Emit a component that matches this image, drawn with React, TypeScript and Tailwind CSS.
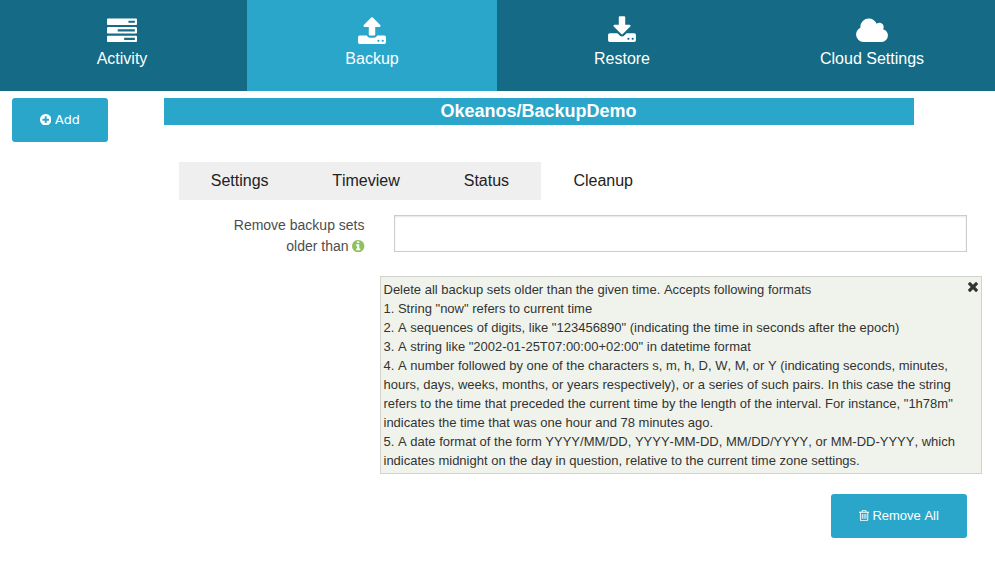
import React from 'react';

const circle =
  'q0 209-103 385.5t-279.5 279.5-385.5 103-385.5-103-279.5-279.5-103-385.5 103-385.5 279.5-279.5 385.5-103 385.5 103 279.5 279.5 103 385.5z';

const paths = {
  tasks:
    'M1024 1408h640v-128h-640v128zm-384-512h1024v-128h-1024v128zm640-512h384v-128h-384v128zm512 832v256q0 26-19 45t-45 19h-1664q-26 0-45-19t-19-45v-256q0-26 19-45t45-19h1664q26 0 45 19t19 45zm0-512v256q0 26-19 45t-45 19h-1664q-26 0-45-19t-19-45v-256q0-26 19-45t45-19h1664q26 0 45 19t19 45zm0-512v256q0 26-19 45t-45 19h-1664q-26 0-45-19t-19-45v-256q0-26 19-45t45-19h1664q26 0 45 19t19 45z',
  upload:
    'M1344 1472q0-26-19-45t-45-19-45 19-19 45 19 45 45 19 45-19 19-45zm256 0q0-26-19-45t-45-19-45 19-19 45 19 45 45 19 45-19 19-45zm128-224v320q0 40-28 68t-68 28h-1472q-40 0-68-28t-28-68v-320q0-40 28-68t68-28h427q21 56 70.5 92t110.5 36h256q61 0 110.5-36t70.5-92h427q40 0 68 28t28 68zm-325-648q-17 40-59 40h-256v448q0 26-19 45t-45 19h-256q-26 0-45-19t-19-45v-448h-256q-42 0-59-40-17-39 14-69l448-448q18-19 45-19t45 19l448 448q31 30 14 69z',
  download:
    'M1344 1344q0-26-19-45t-45-19-45 19-19 45 19 45 45 19 45-19 19-45zm256 0q0-26-19-45t-45-19-45 19-19 45 19 45 45 19 45-19 19-45zm128-224v320q0 40-28 68t-68 28h-1472q-40 0-68-28t-28-68v-320q0-40 28-68t68-28h465l135 136q58 56 136 56t136-56l136-136h464q40 0 68 28t28 68zm-325-569q17 41-14 70l-448 448q-18 19-45 19t-45-19l-448-448q-31-29-14-70 17-39 59-39h256v-448q0-26 19-45t45-19h256q26 0 45 19t19 45v448h256q42 0 59 39z',
  cloud:
    'M1984 1152q0 159-112.5 271.5t-271.5 112.5h-1088q-185 0-316.5-131.5t-131.5-316.5q0-132 71-241.5t187-163.5q-2-28-2-43 0-212 150-362t362-150q158 0 286.5 88t187.5 230q70-62 166-62 106 0 181 75t75 181q0 75-41 138 129 30 213 134.5t84 239.5z',
  plus:
    'M1344 960v-128q0-26-19-45t-45-19h-256v-256q0-26-19-45t-45-19h-128q-26 0-45 19t-19 45v256h-256q-26 0-45 19t-19 45v128q0 26 19 45t45 19h256v256q0 26 19 45t45 19h128q26 0 45-19t19-45v-256h256q26 0 45-19t19-45zm320-64' +
    circle,
  info:
    'M1152 1376v-160q0-14-9-23t-23-9h-96v-512q0-14-9-23t-23-9h-320q-14 0-23 9t-9 23v160q0 14 9 23t23 9h96v320h-96q-14 0-23 9t-9 23v160q0 14 9 23t23 9h448q14 0 23-9t9-23zm-128-896v-160q0-14-9-23t-23-9h-192q-14 0-23 9t-9 23v160q0 14 9 23t23 9h192q14 0 23-9t9-23zm640 416' +
    circle,
  trash:
    'M704 736v576q0 14-9 23t-23 9h-64q-14 0-23-9t-9-23v-576q0-14 9-23t23-9h64q14 0 23 9t9 23zm256 0v576q0 14-9 23t-23 9h-64q-14 0-23-9t-9-23v-576q0-14 9-23t23-9h64q14 0 23 9t9 23zm256 0v576q0 14-9 23t-23 9h-64q-14 0-23-9t-9-23v-576q0-14 9-23t23-9h64q14 0 23 9t9 23zm128 724v-948h-896v948q0 22 7 40.5t14.5 27 10.5 8.5h832q3 0 10.5-8.5t14.5-27 7-40.5zm-672-1076h448l-48-117q-7-9-17-11h-317q-10 2-17 11zm928 32v64q0 14-9 23t-23 9h-96v948q0 83-47 143.5t-113 60.5h-832q-66 0-113-58.5t-47-141.5v-952h-96q-14 0-23-9t-9-23v-64q0-14 9-23t23-9h309l70-167q15-37 54-63t79-26h320q40 0 79 26t54 63l70 167h309q14 0 23 9t9 23z',
  times:
    'M1490 1322q0 40-28 68l-136 136q-28 28-68 28t-68-28l-294-294-294 294q-28 28-68 28t-68-28l-136-136q-28-28-28-68t28-68l294-294-294-294q-28-28-28-68t28-68l136-136q28-28 68-28t68 28l294 294 294-294q28-28 68-28t68 28l136 136q28 28 28 68t-28 68l-294 294 294 294q28 28 28 68z',
};

type IconProps = { name: keyof typeof paths; viewBox?: string; className: string };

function Icon({ name, viewBox = '0 0 1792 1792', className }: IconProps) {
  return (
    <svg viewBox={viewBox} fill="currentColor" className={className} aria-hidden="true">
      <path d={paths[name]} />
    </svg>
  );
}

const navItems: { label: string; icon: keyof typeof paths; viewBox?: string; iconClass: string; className: string }[] = [
  { label: 'Activity', icon: 'tasks', viewBox: '0 -24 1792 1792', iconClass: 'h-[30px] w-[30px]', className: 'w-[247px] bg-[#156a85] pr-[3px]' },
  { label: 'Backup', icon: 'upload', viewBox: '0 -12 1792 1792', iconClass: 'h-[30px] w-[30px]', className: 'w-[250px] bg-[#2ba6cb]' },
  { label: 'Restore', icon: 'download', viewBox: '0 -12 1792 1792', iconClass: 'h-[30px] w-[30px]', className: 'w-[250px] bg-[#156a85]' },
  { label: 'Cloud Settings', icon: 'cloud', viewBox: '0 -18 2048 1792', iconClass: 'h-[30px] w-[34px]', className: 'w-[250px] bg-[#156a85]' },
];

const helpLines = [
  'Delete all backup sets older than the given time. Accepts following formats',
  '1. String "now" refers to current time',
  '2. A sequences of digits, like "123456890" (indicating the time in seconds after the epoch)',
  '3. A string like "2002-01-25T07:00:00+02:00" in datetime format',
  '4. A number followed by one of the characters s, m, h, D, W, M, or Y (indicating seconds, minutes,',
  'hours, days, weeks, months, or years respectively), or a series of such pairs. In this case the string',
  'refers to the time that preceded the current time by the length of the interval. For instance, "1h78m"',
  'indicates the time that was one hour and 78 minutes ago.',
  '5. A date format of the form YYYY/MM/DD, YYYY-MM-DD, MM/DD/YYYY, or MM-DD-YYYY, which',
  'indicates midnight on the day in question, relative to the current time zone settings.',
];

export default function App() {
  return (
    <div className="h-[570px] w-[995px] overflow-hidden bg-white font-['Liberation_Sans',Arial,sans-serif] text-[#222] [font-kerning:none]">
      <nav className="flex h-[91px]">
        {navItems.map((item) => (
          <a key={item.label} className={`flex shrink-0 flex-col items-center pt-4 text-white ${item.className}`}>
            <Icon name={item.icon} viewBox={item.viewBox} className={item.iconClass} />
            <span className="mt-px text-base leading-6">{item.label}</span>
          </a>
        ))}
      </nav>

      <div className="flex pt-[7px] pl-3">
        <button className="flex h-11 w-24 shrink-0 items-center justify-center gap-[3.5px] rounded-[3px] bg-[#2ba6cb] font-['DejaVu_Sans',sans-serif] text-[12.8px] text-white">
          <Icon name="plus" viewBox="128 128 1536 1536" className="-mt-px h-[11.4px] w-[11.4px]" />
          <span>Add</span>
        </button>

        <main className="ml-14 w-[831px]">
          <h1 className="h-[27px] w-[750px] bg-[#2ba6cb] pr-px text-center text-lg leading-[27px] font-bold text-white">
            Okeanos/BackupDemo
          </h1>

          <div className="mt-[37px] ml-[15px] flex h-[38px] text-base leading-[38px]">
            <a className="bg-[#efefef] px-[31.8px]">Settings</a>
            <a className="bg-[#efefef] px-[31.8px]">Timeview</a>
            <a className="bg-[#efefef] pr-[31.6px] pl-[32.2px]">Status</a>
            <a className="pl-[32.7px]">Cleanup</a>
          </div>

          <div className="mt-[15px] flex">
            <label className="w-[201px] pr-[0.5px] text-right text-sm leading-[21px] text-[#4d4d4d]">
              Remove backup sets
              <br />
              <span className="mr-[3.6px]">older than</span>
              <Icon name="info" viewBox="128 128 1536 1536" className="inline h-[12.4px] w-[12.4px] align-[-1px] text-[#8fc161]" />
            </label>
            <input className="ml-[29px] h-[37px] w-[573px] border border-[#ccc] bg-white px-2 text-sm shadow-[inset_0_1px_2px_rgba(0,0,0,0.1)] outline-none" />
          </div>

          <section className="mt-[19px] ml-[216px] flex h-[198px] w-[602px] justify-between border border-[#d2d3cf] bg-[#f0f3ec] pt-[3px] pl-[2.5px]">
            <div className="text-[13px] leading-[19px] whitespace-nowrap text-[#333]">
              {helpLines.map((line) => (
                <p key={line}>{line}</p>
              ))}
            </div>
            <Icon name="times" viewBox="302 366 1188 1188" className="mt-[2px] mr-[3px] h-[10px] w-[10px] shrink-0 text-[#333]" />
          </section>

          <button className="mt-5 ml-[667px] flex h-11 w-[136px] items-center justify-center gap-[3.6px] rounded-[3px] bg-[#2ba6cb] pr-[0.5px] text-[13px] text-white">
            <Icon name="trash" viewBox="192 0 1408 1792" className="-mt-[1px] h-[13px] w-[10.2px]" />
            <span>Remove All</span>
          </button>
        </main>
      </div>
    </div>
  );
}
